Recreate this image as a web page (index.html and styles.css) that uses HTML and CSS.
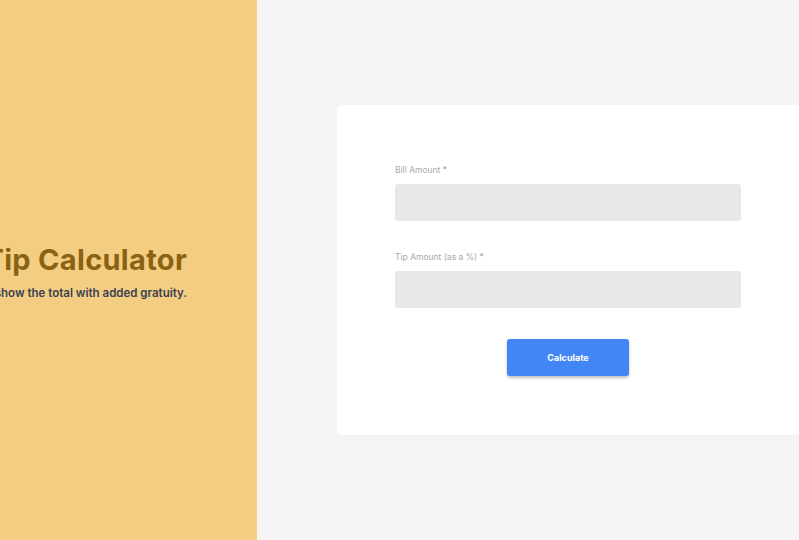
FILE: index.html
```html
<!DOCTYPE html>
<html lang="en">
<head>
<meta charset="utf-8">
<title>Tip Calculator</title>
<link rel="stylesheet" href="styles.css">
</head>
<body>
<div class="page">
  <aside class="intro">
    <div class="intro-text">
      <h1 class="title">Tip Calculator</h1>
      <p class="subtitle">Calculate and show the total with added gratuity.</p>
    </div>
  </aside>
  <main class="main">
    <form class="card">
      <label class="label" for="bill">Bill Amount *</label>
      <input class="input" id="bill" type="text">
      <label class="label second" for="tip">Tip Amount (as a %) *</label>
      <input class="input" id="tip" type="text">
      <div class="actions">
        <button class="btn" type="button">Calculate</button>
      </div>
    </form>
  </main>
</div>
</body>
</html>
```
FILE: styles.css
```css
html, body {
  margin: 0;
  padding: 0;
  height: 100%;
  overflow: hidden;
}
body {
  font-family: Inter, "Noto Sans", sans-serif;
}
.page {
  display: flex;
  height: 540px;
  width: 799px;
}
.intro {
  width: 257px;
  flex: none;
  background: #f3ce82;
  display: flex;
  align-items: center;
  justify-content: flex-end;
  padding-right: 70px;
  box-sizing: border-box;
  overflow: hidden;
}
.intro-text {
  white-space: nowrap;
  text-align: right;
  flex: none;
  margin-top: 2px;
}
.title {
  margin: 0;
  font-size: 29px;
  font-weight: 700;
  color: #8a6212;
  letter-spacing: 0.3px;
  line-height: 36px;
}
.subtitle {
  margin: 8px 0 0;
  font-size: 11.5px;
  font-weight: 600;
  color: #3b4252;
}
.main {
  flex: 1;
  background: #f4f4f4;
  padding: 105px 0 0 80px;
}
.card {
  width: 462px;
  height: 330px;
  box-sizing: border-box;
  background: #ffffff;
  border-radius: 5px 0 0 5px;
  padding: 59px 58px 0 58px;
  display: flex;
  flex-direction: column;
}
.label {
  font-size: 8.5px;
  color: #a9a9a9;
  line-height: 12px;
  margin-bottom: 8px;
}
.label.second {
  margin-top: 30px;
}
.input {
  height: 37px;
  border: none;
  border-radius: 3px;
  background: #e8e8e8;
  box-sizing: border-box;
  width: 346px;
  margin: 0;
  padding: 0 10px;
}
.actions {
  display: flex;
  justify-content: center;
  margin-top: 31px;
}
.btn {
  width: 122px;
  height: 37px;
  border: none;
  border-radius: 3px;
  background: #4285f4;
  color: #ffffff;
  font-family: Inter, "Noto Sans", sans-serif;
  font-size: 9px;
  font-weight: 700;
  box-shadow: 0 2px 3px rgba(0,0,0,0.25);
}
```
